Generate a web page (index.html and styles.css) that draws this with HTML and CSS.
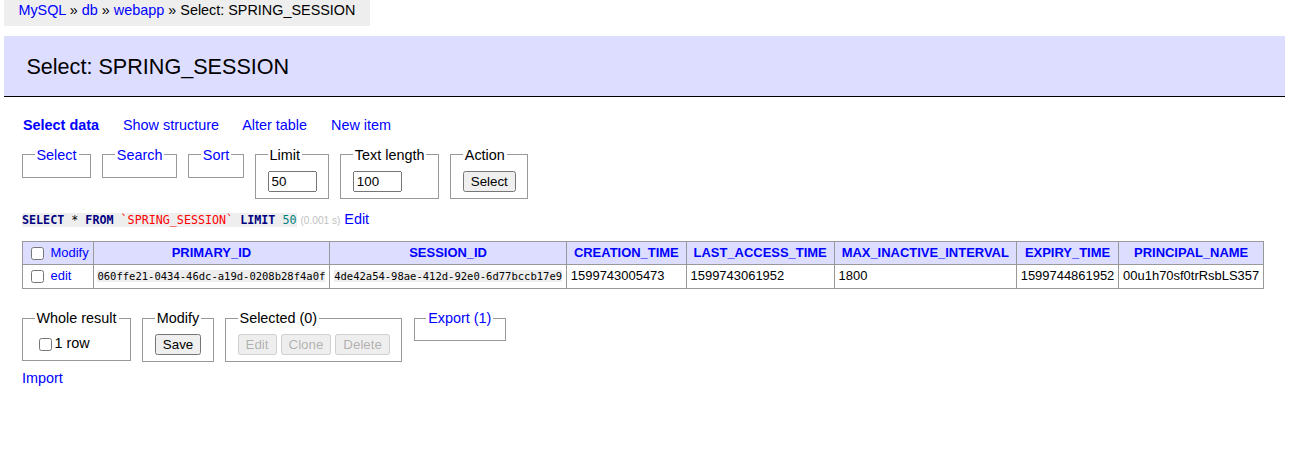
FILE: index.html
```html
<!DOCTYPE html>
<html lang="en">
<head>
<meta charset="utf-8">
<title>Select: SPRING_SESSION - Adminer</title>
<link rel="stylesheet" href="styles.css">
</head>
<body>
<p class="breadcrumb"><a href="#">MySQL</a> » <a href="#">db</a> » <a href="#">webapp</a> » Select: SPRING_SESSION</p>
<div class="content">
  <h2 class="title">Select: SPRING_SESSION</h2>
  <p class="links"><a class="active" href="#">Select data</a> <a href="#">Show structure</a> <a href="#">Alter table</a> <a href="#">New item</a></p>
  <form class="filters">
    <fieldset class="box"><legend><a href="#">Select</a></legend></fieldset>
    <fieldset class="box"><legend><a href="#">Search</a></legend></fieldset>
    <fieldset class="box"><legend><a href="#">Sort</a></legend></fieldset>
    <fieldset class="box"><legend>Limit</legend><input class="size" type="text" value="50"></fieldset>
    <fieldset class="box"><legend>Text length</legend><input class="size" type="text" value="100"></fieldset>
    <fieldset class="box"><legend>Action</legend><input class="btn" type="submit" value="Select"></fieldset>
  </form>
  <p class="query"><code class="sql"><span class="kw">SELECT</span> * <span class="kw">FROM</span> <span class="bac">`SPRING_SESSION`</span> <span class="kw">LIMIT</span> <span class="num">50</span></code> <span class="time">(0.001 s)</span> <a href="#">Edit</a></p>
  <table class="result">
    <thead>
      <tr>
        <td class="check-cell"><input type="checkbox" class="cb"> <a href="#">Modify</a></td>
        <th><a href="#">PRIMARY_ID</a></th>
        <th><a href="#">SESSION_ID</a></th>
        <th><a href="#">CREATION_TIME</a></th>
        <th><a href="#">LAST_ACCESS_TIME</a></th>
        <th><a href="#">MAX_INACTIVE_INTERVAL</a></th>
        <th><a href="#">EXPIRY_TIME</a></th>
        <th><a href="#">PRINCIPAL_NAME</a></th>
      </tr>
    </thead>
    <tbody>
      <tr>
        <td class="check-cell"><input type="checkbox" class="cb"> <a href="#">edit</a></td>
        <td><code class="val">060ffe21-0434-46dc-a19d-0208b28f4a0f</code></td>
        <td><code class="val">4de42a54-98ae-412d-92e0-6d77bccb17e9</code></td>
        <td>1599743005473</td>
        <td>1599743061952</td>
        <td>1800</td>
        <td>1599744861952</td>
        <td>00u1h70sf0trRsbLS357</td>
      </tr>
    </tbody>
  </table>
  <div class="footer">
    <fieldset class="box"><legend>Whole result</legend><label class="row-label"><input type="checkbox" class="cb-row">1 row</label></fieldset>
    <fieldset class="box"><legend>Modify</legend><input class="btn" type="submit" value="Save"></fieldset>
    <fieldset class="box"><legend>Selected (0)</legend><input class="btn" type="submit" value="Edit" disabled> <input class="btn" type="submit" value="Clone" disabled> <input class="btn" type="submit" value="Delete" disabled></fieldset>
    <fieldset class="box"><legend><a href="#">Export (1)</a></legend></fieldset>
    <div class="import"><a href="#">Import</a></div>
  </div>
</div>
</body>
</html>
```
FILE: styles.css
```css
html, body {
  margin: 0;
  padding: 0;
}
body {
  font: 14.4px/1.25 "Liberation Sans", Arial, Helvetica, sans-serif;
  color: #000;
  background: #fff;
}
a {
  color: #00f;
  text-decoration: none;
}
.breadcrumb {
  margin: 0 0 0 4px;
  width: fit-content;
  height: 26px;
  line-height: 20px;
  padding: 0 14.4px;
  background: #eee;
  white-space: nowrap;
}
.content {
  padding: 10px 7px 20px 22px;
}
.title {
  font-size: 21.6px;
  font-weight: normal;
  line-height: 27px;
  margin: 0 0 19px -18px;
  padding: 16.5px 21.6px 16.5px 22.4px;
  border-bottom: 1px solid #000;
  background: #ddf;
  color: #000;
}
.links {
  margin: 0;
  padding-left: 1px;
}
.links a {
  white-space: nowrap;
  margin-right: 20px;
}
.links a.active {
  font-weight: bold;
}
.filters, .footer {
  margin: 0;
}
.box {
  display: inline-block;
  vertical-align: top;
  padding: 7px 11.52px 6px;
  margin: 11.52px 7.3px 0 0;
  border: 1px solid #999;
  min-inline-size: 0;
}
.box legend {
  padding: 0 2px;
}
.size {
  box-sizing: border-box;
  width: 49px;
  font: 13.333px "Liberation Sans", Arial, sans-serif;
  vertical-align: middle;
}
.btn {
  font: 13.333px "Liberation Sans", Arial, sans-serif;
  vertical-align: middle;
}
.query {
  margin: 11.52px 20px 0 0;
}
.sql {
  font-family: "DejaVu Sans Mono", monospace;
  font-size: 11.7px;
  background: #eee;
}
.sql .kw {
  color: navy;
  font-weight: bold;
}
.sql .bac {
  color: red;
}
.sql .num {
  color: #007f7f;
}
.time {
  color: silver;
  font-size: 10.08px;
}
.result {
  margin: 12.96px 20px 0 0;
  border-collapse: collapse;
  font-size: 12.96px;
}
.result td, .result th {
  border: 1px solid #999;
  padding: 2.6px 3.9px;
  white-space: nowrap;
}
.result thead td, .result thead th {
  background: #ddf;
}
.result thead th {
  text-align: center;
  padding: 2.6px 6.95px;
  font-weight: bold;
}
.cb {
  vertical-align: middle;
  margin: 2px 3px 2px 4px;
}
.cb-row {
  vertical-align: middle;
}
.val {
  font-family: "DejaVu Sans Mono", monospace;
  font-size: 10.53px;
  background: #eee;
}
.footer {
  padding-top: 9px;
  padding-bottom: 6.8px;
}
.import {
  padding-top: 7.2px;
}
```
